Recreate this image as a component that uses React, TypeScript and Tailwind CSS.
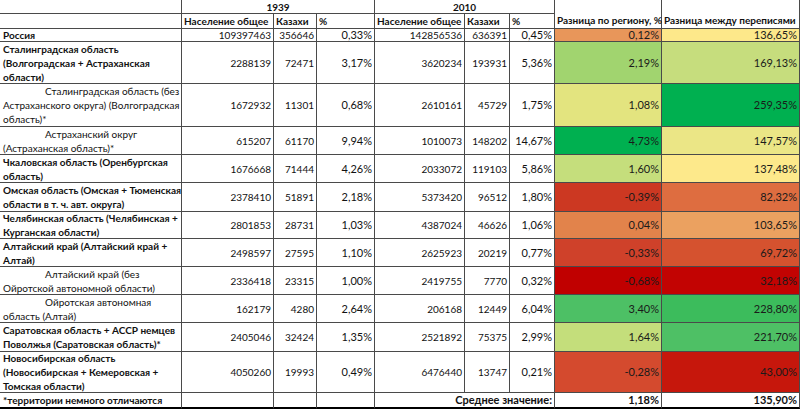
import React from 'react';

type Row = {
  lines: string[];
  indent?: boolean;
  h: string;
  v: string[];
  c1: string;
  c2: string;
};

const rows: Row[] = [
  { lines: ['Россия'], h: 'h-[13px]', v: ['109397463', '356646', '0,33%', '142856536', '636391', '0,45%', '0,12%', '136,65%'], c1: 'bg-[#e8965a]', c2: 'bg-[#fde88a]' },
  { lines: ['Сталинградская область', '(Волгоградская + Астраханская', 'области)'], h: 'h-[42px]', v: ['2288139', '72471', '3,17%', '3620234', '193931', '5,36%', '2,19%', '169,13%'], c1: 'bg-[#a1d46f]', c2: 'bg-[#c6dd7d]' },
  { lines: ['Сталинградская область (без', 'Астраханского округа) (Волгоградская', 'область)*'], indent: true, h: 'h-[43px]', v: ['1672932', '11301', '0,68%', '2610161', '45729', '1,75%', '1,08%', '259,35%'], c1: 'bg-[#e3e47f]', c2: 'bg-[#00b050]' },
  { lines: ['Астраханский округ', '(Астраханская область)*'], indent: true, h: 'h-[28px]', v: ['615207', '61170', '9,94%', '1010073', '148202', '14,67%', '4,73%', '147,57%'], c1: 'bg-[#00b050]', c2: 'bg-[#ebe686]' },
  { lines: ['Чкаловская область (Оренбургская', 'область)'], h: 'h-[28px]', v: ['1676668', '71444', '4,26%', '2033072', '119103', '5,86%', '1,60%', '137,48%'], c1: 'bg-[#c5de7c]', c2: 'bg-[#fde98b]' },
  { lines: ['Омская область (Омская + Тюменская', 'области в т. ч. авт. округа)'], h: 'h-[29px]', v: ['2378410', '51891', '2,18%', '5373420', '96512', '1,80%', '-0,39%', '82,32%'], c1: 'bg-[#cc3822]', c2: 'bg-[#de6d40]' },
  { lines: ['Челябинская область (Челябинская +', 'Курганская области)'], h: 'h-[27px]', v: ['2801853', '28731', '1,03%', '4387024', '46626', '1,06%', '0,04%', '103,65%'], c1: 'bg-[#e2834b]', c2: 'bg-[#eba160]' },
  { lines: ['Алтайский край (Алтайский край +', 'Алтай)'], h: 'h-[28px]', v: ['2498597', '27595', '1,10%', '2625923', '20219', '0,77%', '-0,33%', '69,72%'], c1: 'bg-[#cf412a]', c2: 'bg-[#d5522f]' },
  { lines: ['Алтайский край (без', 'Ойротской автономной области)'], indent: true, h: 'h-[28px]', v: ['2336418', '23315', '1,00%', '2419755', '7770', '0,32%', '-0,68%', '32,18%'], c1: 'bg-[#c00000]', c2: 'bg-[#c20302]' },
  { lines: ['Ойротская автономная', 'область (Алтай)'], indent: true, h: 'h-[28px]', v: ['162179', '4280', '2,64%', '206168', '12449', '6,04%', '3,40%', '228,80%'], c1: 'bg-[#4dc065]', c2: 'bg-[#3cbc5c]' },
  { lines: ['Саратовская область + АССР немцев', 'Поволжья (Саратовская область)*'], h: 'h-[29px]', v: ['2405046', '32424', '1,35%', '2521892', '75375', '2,99%', '1,64%', '221,70%'], c1: 'bg-[#c4de7b]', c2: 'bg-[#4ec065]' },
  { lines: ['Новосибирская область', '(Новосибирская + Кемеровская +', 'Томская области)'], h: 'h-[41px]', v: ['4050260', '19993', '0,49%', '6476440', '13747', '0,21%', '-0,28%', '43,00%'], c1: 'bg-[#d44a2e]', c2: 'bg-[#c6170c]' },
];

const line = 'border-r border-b border-[#4a4a4a]';

const App: React.FC = () => {
  return (
    <div className="w-[800px] h-[409px] bg-white text-[10px] leading-[14px] text-[#111] overflow-hidden" style={{ fontFamily: 'Lato, "Liberation Sans", sans-serif' }}>
      <div className="grid grid-cols-[182px_92px_43px_58px_90px_45px_45px_107px_138px]">
        {/* header */}
        <div className={`${line} h-[14px]`}></div>
        <div className={`${line} col-span-3 h-[14px] flex items-center justify-center font-bold`}>1939</div>
        <div className={`${line} col-span-3 h-[14px] flex items-center justify-center font-bold`}>2010</div>
        <div className={`${line} row-span-2 flex items-end px-[2px] pb-[1px] font-bold whitespace-nowrap`}>Разница по региону, %</div>
        <div className={`${line} row-span-2 flex items-end px-[2px] pb-[1px] font-bold whitespace-nowrap`}>Разница между переписями</div>

        <div className={`${line} h-[15px]`}></div>
        {['Население общее', 'Казахи', '%', 'Население общее', 'Казахи', '%'].map((t, i) => (
          <div key={i} className={`${line} h-[15px] flex items-center px-[2px] font-bold whitespace-nowrap overflow-hidden`}>{t}</div>
        ))}

        {rows.map((r, i) => (
          <React.Fragment key={i}>
            <div className={`${line} ${r.h} flex flex-col justify-center px-[3px] whitespace-nowrap overflow-hidden ${r.indent ? 'font-normal' : 'font-bold'}`}>
              {r.lines.map((l, j) => (
                <div key={j} className={j === 0 && r.indent ? 'pl-[42px]' : ''}>{l}</div>
              ))}
            </div>
            {r.v.slice(0, 6).map((v, j) => (
              <div key={j} className={`${line} ${r.h} flex items-center justify-end px-[2px] ${j === 2 || j === 5 ? 'text-[11px]' : ''}`}>{v}</div>
            ))}
            <div className={`${line} ${r.h} ${r.c1} flex items-center justify-end px-[2px] text-[11px] text-[#1a1a1a]`}>{r.v[6]}</div>
            <div className={`${line} ${r.h} ${r.c2} flex items-center justify-end px-[2px] text-[11px] text-[#1a1a1a]`}>{r.v[7]}</div>
          </React.Fragment>
        ))}

        {/* footer */}
        <div className="border-r border-[#4a4a4a] border-b-2 border-b-black h-[16px] flex items-center px-[3px] font-bold whitespace-nowrap">*территории немного отличаются</div>
        <div className="border-r border-[#4a4a4a] border-b-2 border-b-black h-[16px]"></div>
        <div className="border-r border-[#4a4a4a] border-b-2 border-b-black h-[16px]"></div>
        <div className="border-r border-[#4a4a4a] border-b-2 border-b-black h-[16px]"></div>
        <div className="col-span-3 border-r border-[#4a4a4a] border-b-2 border-b-black h-[16px] flex items-center justify-end px-[2px] font-bold text-[11px] whitespace-nowrap">Среднее значение:</div>
        <div className="border-r border-[#4a4a4a] border-b-2 border-b-black h-[16px] flex items-center justify-end px-[2px] font-bold text-[11px]">1,18%</div>
        <div className="border-r border-[#4a4a4a] border-b-2 border-b-black h-[16px] flex items-center justify-end px-[2px] font-bold text-[11px]">135,90%</div>
      </div>
    </div>
  );
};

export default App;
